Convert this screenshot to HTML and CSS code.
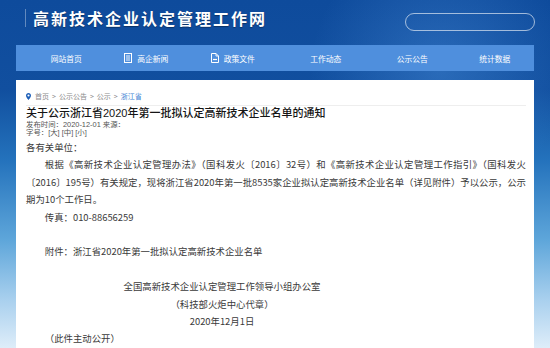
FILE: index.html
```html
<!DOCTYPE html>
<html lang="zh-CN">
<head>
    <meta charset="UTF-8">
    <meta name="viewport" content="width=device-width, initial-scale=1.0">
    <title>高新技术企业认定管理工作网</title>
    <link rel="stylesheet" href="styles.css">
</head>
<body>
    <div class="header">
        <div class="site-title">高新技术企业认定管理工作网</div>
        <div class="search-box"></div>
    </div>

    <div class="nav">
        <a class="nav-item" href="#">网站首页</a>
        <a class="nav-item" href="#">
            <svg class="nav-icon" width="8" height="10" viewBox="0 0 8 10">
                <rect x="0.5" y="0.5" width="7" height="9" fill="none" stroke="#fff" stroke-width="1"/>
                <path d="M2 3h4M2 5h4M2 7h4" stroke="#fff" stroke-width="0.9"/>
            </svg>高企新闻</a>
        <a class="nav-item" href="#">
            <svg class="nav-icon" width="8" height="10" viewBox="0 0 8 10">
                <path d="M0.5 0.5h4.5l2.5 2.5v6.5h-7z" fill="none" stroke="#fff" stroke-width="1"/>
                <path d="M5 0.5v2.5h2.5" fill="none" stroke="#fff" stroke-width="0.9"/>
                <path d="M2 6.5h4" stroke="#fff" stroke-width="1.2"/>
            </svg>政策文件</a>
        <a class="nav-item" href="#">工作动态</a>
        <a class="nav-item" href="#">公示公告</a>
        <a class="nav-item" href="#">统计数据</a>
    </div>

    <div class="panel">
        <div class="crumbs">
            <svg class="pin" width="5" height="7" viewBox="0 0 10 14">
                <path d="M5 0C2.2 0 0 2.2 0 5c0 3.6 5 9 5 9s5-5.4 5-9c0-2.8-2.2-5-5-5zm0 7.2A2.2 2.2 0 1 1 5 2.8a2.2 2.2 0 0 1 0 4.4z" fill="#1d5fb8"/>
            </svg>
            <span>首页</span> &gt; <span>公示公告</span> &gt; <span>公示</span> &gt; <span class="current">浙江省</span>
        </div>

        <h1 class="article-title">关于公示浙江省2020年第一批拟认定高新技术企业名单的通知</h1>
        <div class="meta">发布时间：2020-12-01 来源：</div>
        <div class="meta">字号：[大] [中] [小]</div>

        <div class="article">
            <p>各有关单位：</p>
            <p class="indent">根据《高新技术企业认定管理办法》（国科发火〔2016〕32号）和《高新技术企业认定管理工作指引》（国科发火〔2016〕195号）有关规定，现将浙江省2020年第一批8535家企业拟认定高新技术企业名单（详见附件）予以公示，公示期为10个工作日。</p>
            <p class="indent">传真：010-88656259</p>
            <p class="blank"></p>
            <p class="indent">附件：浙江省2020年第一批拟认定高新技术企业名单</p>
            <p class="blank"></p>
            <div class="sign">
                <p>全国高新技术企业认定管理工作领导小组办公室</p>
                <p>（科技部火炬中心代章）</p>
                <p>2020年12月1日</p>
            </div>
            <p class="indent">（此件主动公开）</p>
        </div>
    </div>
</body>
</html>
```

FILE: styles.css
```css
body {
    margin: 0;
    font-family: "Noto Sans CJK SC", "Noto Sans", sans-serif;
    background:
        radial-gradient(circle at 440px 70px, rgba(90, 160, 235, 0.35), rgba(90, 160, 235, 0) 130px),
        linear-gradient(180deg, #0e4b9c 0, #114f9f 90px, #2472bc 160px, #5ea6da 240px, #a9d0ee 300px, #deedf9 348px);
    min-height: 348px;
    overflow: hidden;
}
.header {
    height: 45px;
    display: flex;
    justify-content: space-between;
    align-items: flex-start;
    padding: 0 15px 0 25px;
    box-sizing: border-box;
}
.site-title {
    margin-top: 9px;
    padding-left: 7px;
    border-left: 1px solid rgba(255, 255, 255, 0.35);
    color: #fff;
    font-size: 16px;
    line-height: 18px;
    font-weight: bold;
    letter-spacing: 2px;
    text-shadow: 0 1px 1px rgba(0, 0, 0, 0.35);
}
.search-box {
    width: 128px;
    height: 16px;
    margin-top: 13px;
    border: 1px solid rgba(255, 255, 255, 0.6);
    border-radius: 9px;
}
.nav {
    margin: 0 16px;
    width: 518px;
    height: 26px;
    background: #4f8fdd;
    display: grid;
    grid-template-columns: repeat(5, 86.5px) 1fr;
    padding-left: 7px;
    box-sizing: border-box;
    align-items: center;
}
.nav-item {
    color: #fff;
    text-decoration: none;
    font-size: 7.8px;
    text-align: center;
    display: flex;
    justify-content: center;
    align-items: center;
}
.nav-icon {
    margin-left: -13px;
    margin-right: 5px;
}
.panel {
    margin: 9px 16px 0;
    width: 518px;
    min-height: 280px;
    background: #fff;
    padding: 10px 8px 0 10px;
    box-sizing: border-box;
}
.crumbs {
    font-size: 7px;
    line-height: 12px;
    color: #8a8a8a;
    padding-bottom: 3px;
    border-bottom: 1px solid #eeeeee;
    display: flex;
    align-items: center;
    gap: 3px;
}
.pin {
    margin-right: 1px;
}
.crumbs .current {
    color: #3c7fd3;
}
.article-title {
    margin: 0;
    font-family: "Liberation Sans", "Noto Sans CJK SC", sans-serif;
    font-size: 11px;
    line-height: 14.5px;
    font-weight: 500;
    color: #151515;
}
.meta {
    font-family: "Liberation Sans", "Noto Sans CJK SC", sans-serif;
    font-size: 7.4px;
    line-height: 8.7px;
    color: #555;
}
.article {
    margin-top: 1px;
    font-size: 9.4px;
    line-height: 17.4px;
    color: #3a3a3a;
}
.article p {
    margin: 0;
    text-align: justify;
}
.article .indent {
    text-indent: 2em;
}
.article .blank {
    height: 17.4px;
}
.sign {
    width: 392px;
}
.sign p {
    text-align: center;
}
```
